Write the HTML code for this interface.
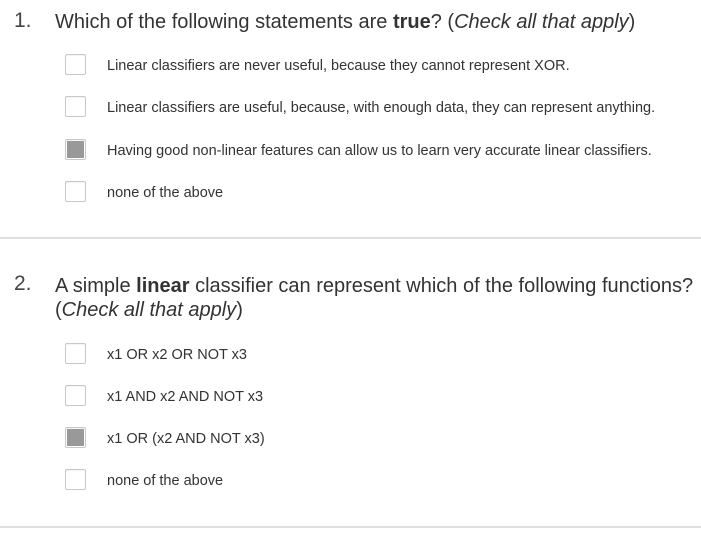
<!DOCTYPE html>
<html><head><style>
body{margin:0;width:701px;height:539px;background:#fff;position:relative;overflow:hidden;font-family:"Liberation Sans",sans-serif;color:#333}
.n{position:absolute;left:14px;font-size:21px;color:#444}
.q{position:absolute;left:55px;font-size:20px;color:#333;line-height:24px;white-space:nowrap}
.cb{position:absolute;left:65px;width:19px;height:19px;border:1px solid #c8c8c8;border-radius:2px;background:#fff;box-shadow:inset 0 1px 1px rgba(0,0,0,.05)}
.cb.c::after{content:"";position:absolute;left:1px;top:1px;width:17px;height:17px;background:#999}
.t{position:absolute;left:107px;font-size:14.5px;color:#333;white-space:nowrap;line-height:18px}
.hr{position:absolute;left:0;width:701px;height:2px;background:#e0e0e0}
</style></head><body>
<div class="n" style="top:9px">1.</div>
<div class="q" style="top:10px">Which of the following statements are <b>true</b>? (<i>Check all that apply</i>)</div>
<div class="cb" style="top:54px"></div><div class="t" style="top:57px">Linear classifiers are never useful, because they cannot represent XOR.</div>
<div class="cb" style="top:96px"></div><div class="t" style="top:99px">Linear classifiers are useful, because, with enough data, they can represent anything.</div>
<div class="cb c" style="top:139px"></div><div class="t" style="top:142px">Having good non-linear features can allow us to learn very accurate linear classifiers.</div>
<div class="cb" style="top:181px"></div><div class="t" style="top:184px">none of the above</div>
<div class="hr" style="top:237px"></div>
<div class="n" style="top:272px">2.</div>
<div class="q" style="top:274px">A simple <b>linear</b> classifier can represent which of the following functions?<br>(<i>Check all that apply</i>)</div>
<div class="cb" style="top:343px"></div><div class="t" style="top:346px">x1 OR x2 OR NOT x3</div>
<div class="cb" style="top:385px"></div><div class="t" style="top:388px">x1 AND x2 AND NOT x3</div>
<div class="cb c" style="top:427px"></div><div class="t" style="top:430px">x1 OR (x2 AND NOT x3)</div>
<div class="cb" style="top:469px"></div><div class="t" style="top:472px">none of the above</div>
<div class="hr" style="top:526px"></div>
</body></html>
